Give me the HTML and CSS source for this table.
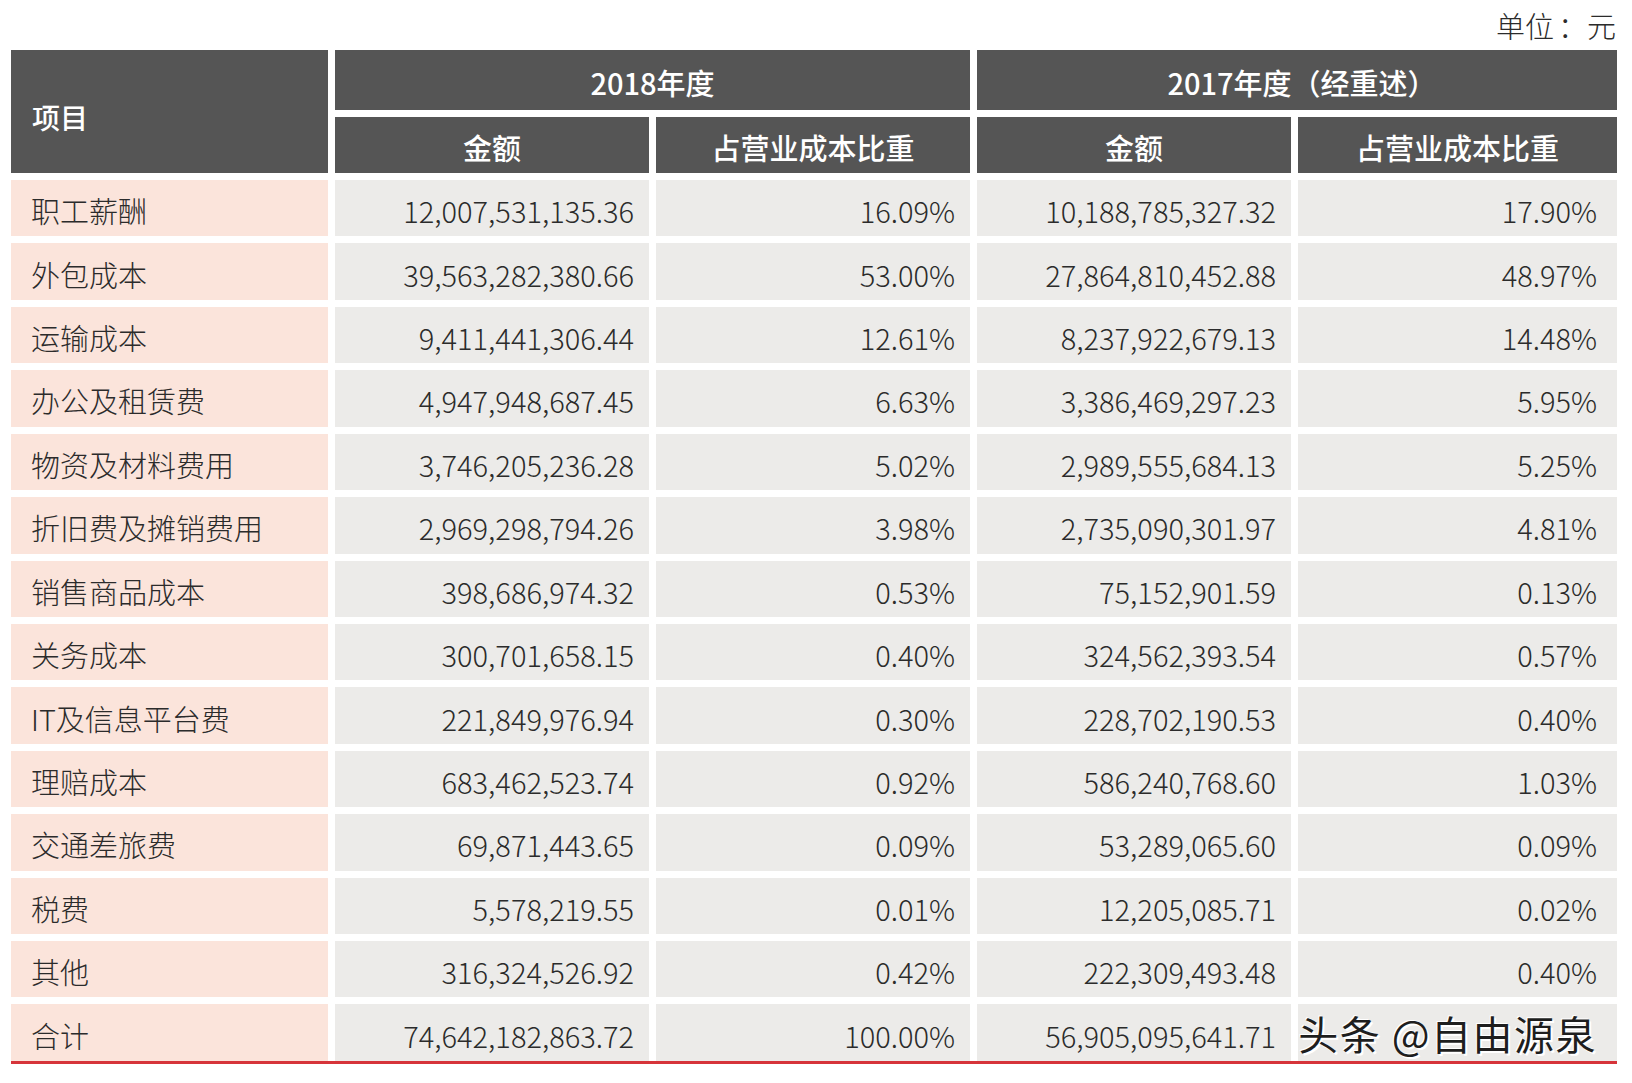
FILE: index.html
```html
<!DOCTYPE html>
<html lang="zh-CN">
<head>
<meta charset="utf-8">
<title>营业成本构成</title>
<link rel="stylesheet" href="styles.css">
</head>
<body>
<div class="page">
  <div class="unit">单位<span class="colon">：</span>元</div>
  <div class="table">
    <div class="th th-item">项目</div>
    <div class="th th-year th-y1">2018年度</div>
    <div class="th th-year th-y2">2017年度（经重述）</div>
    <div class="th th-sub">金额</div>
    <div class="th th-sub">占营业成本比重</div>
    <div class="th th-sub">金额</div>
    <div class="th th-sub">占营业成本比重</div>

    <div class="td name">职工薪酬</div><div class="td num">12,007,531,135.36</div><div class="td num">16.09%</div><div class="td num">10,188,785,327.32</div><div class="td num">17.90%</div>
    <div class="td name">外包成本</div><div class="td num">39,563,282,380.66</div><div class="td num">53.00%</div><div class="td num">27,864,810,452.88</div><div class="td num">48.97%</div>
    <div class="td name">运输成本</div><div class="td num">9,411,441,306.44</div><div class="td num">12.61%</div><div class="td num">8,237,922,679.13</div><div class="td num">14.48%</div>
    <div class="td name">办公及租赁费</div><div class="td num">4,947,948,687.45</div><div class="td num">6.63%</div><div class="td num">3,386,469,297.23</div><div class="td num">5.95%</div>
    <div class="td name">物资及材料费用</div><div class="td num">3,746,205,236.28</div><div class="td num">5.02%</div><div class="td num">2,989,555,684.13</div><div class="td num">5.25%</div>
    <div class="td name">折旧费及摊销费用</div><div class="td num">2,969,298,794.26</div><div class="td num">3.98%</div><div class="td num">2,735,090,301.97</div><div class="td num">4.81%</div>
    <div class="td name">销售商品成本</div><div class="td num">398,686,974.32</div><div class="td num">0.53%</div><div class="td num">75,152,901.59</div><div class="td num">0.13%</div>
    <div class="td name">关务成本</div><div class="td num">300,701,658.15</div><div class="td num">0.40%</div><div class="td num">324,562,393.54</div><div class="td num">0.57%</div>
    <div class="td name">IT及信息平台费</div><div class="td num">221,849,976.94</div><div class="td num">0.30%</div><div class="td num">228,702,190.53</div><div class="td num">0.40%</div>
    <div class="td name">理赔成本</div><div class="td num">683,462,523.74</div><div class="td num">0.92%</div><div class="td num">586,240,768.60</div><div class="td num">1.03%</div>
    <div class="td name">交通差旅费</div><div class="td num">69,871,443.65</div><div class="td num">0.09%</div><div class="td num">53,289,065.60</div><div class="td num">0.09%</div>
    <div class="td name">税费</div><div class="td num">5,578,219.55</div><div class="td num">0.01%</div><div class="td num">12,205,085.71</div><div class="td num">0.02%</div>
    <div class="td name">其他</div><div class="td num">316,324,526.92</div><div class="td num">0.42%</div><div class="td num">222,309,493.48</div><div class="td num">0.40%</div>
    <div class="td name">合计</div><div class="td num">74,642,182,863.72</div><div class="td num">100.00%</div><div class="td num">56,905,095,641.71</div><div class="td num wm-cell"><span class="watermark">头条 @自由源泉</span></div>
  </div>
</div>
</body>
</html>
```

FILE: styles.css
```css
* { box-sizing: border-box; }
html, body { margin: 0; padding: 0; background: #ffffff; }
body {
  font-family: "Noto Sans CJK SC", "Noto Sans", sans-serif;
  color: #2b2b2b;
}
.page {
  width: 1632px;
  height: 1083px;
  padding: 0 15px 0 11px;
}
.unit {
  height: 50px;
  line-height: 50px;
  text-align: right;
  font-size: 29px;
  font-weight: 300;
  color: #2b2b2b;
  padding-right: 1px;
}
.colon {
  margin-left: 4px;
}
.table {
  display: grid;
  grid-template-columns: 317px 314px 314px 314px 1fr;
  grid-template-rows: 60px 56px repeat(14, 56.43px);
  column-gap: 7px;
  row-gap: 7px;
  border-bottom: 3px solid #d6343a;
}
.th {
  background: #555555;
  color: #ffffff;
  font-size: 29px;
  font-weight: 500;
  display: flex;
  align-items: center;
  justify-content: center;
  padding-top: 4px;
}
.th-item {
  grid-row: 1 / span 2;
  justify-content: flex-start;
  padding-left: 21px;
  padding-top: 10px;
  font-size: 28px;
}
.th-y1 { grid-column: 2 / span 2; }
.th-y2 { grid-column: 4 / span 2; padding-left: 10px; }
.td {
  background: #ecebe9;
  font-size: 29px;
  font-weight: 300;
  display: flex;
  align-items: center;
  padding-top: 4px;
}
.name {
  background: #fbe4db;
  padding-left: 20px;
}
.num {
  justify-content: flex-end;
  padding-right: 15px;
}
.num:nth-child(5n+7) { padding-right: 20px; }
.wm-cell {
  padding-right: 12px;
  padding-top: 0;
}
.watermark {
  font-size: 40px;
  font-weight: 400;
  color: #1e1e1e;
  letter-spacing: 1.5px;
  white-space: nowrap;
  text-shadow: 2px 2px 0 #ffffff, -1px -1px 0 #ffffff;
}
```
